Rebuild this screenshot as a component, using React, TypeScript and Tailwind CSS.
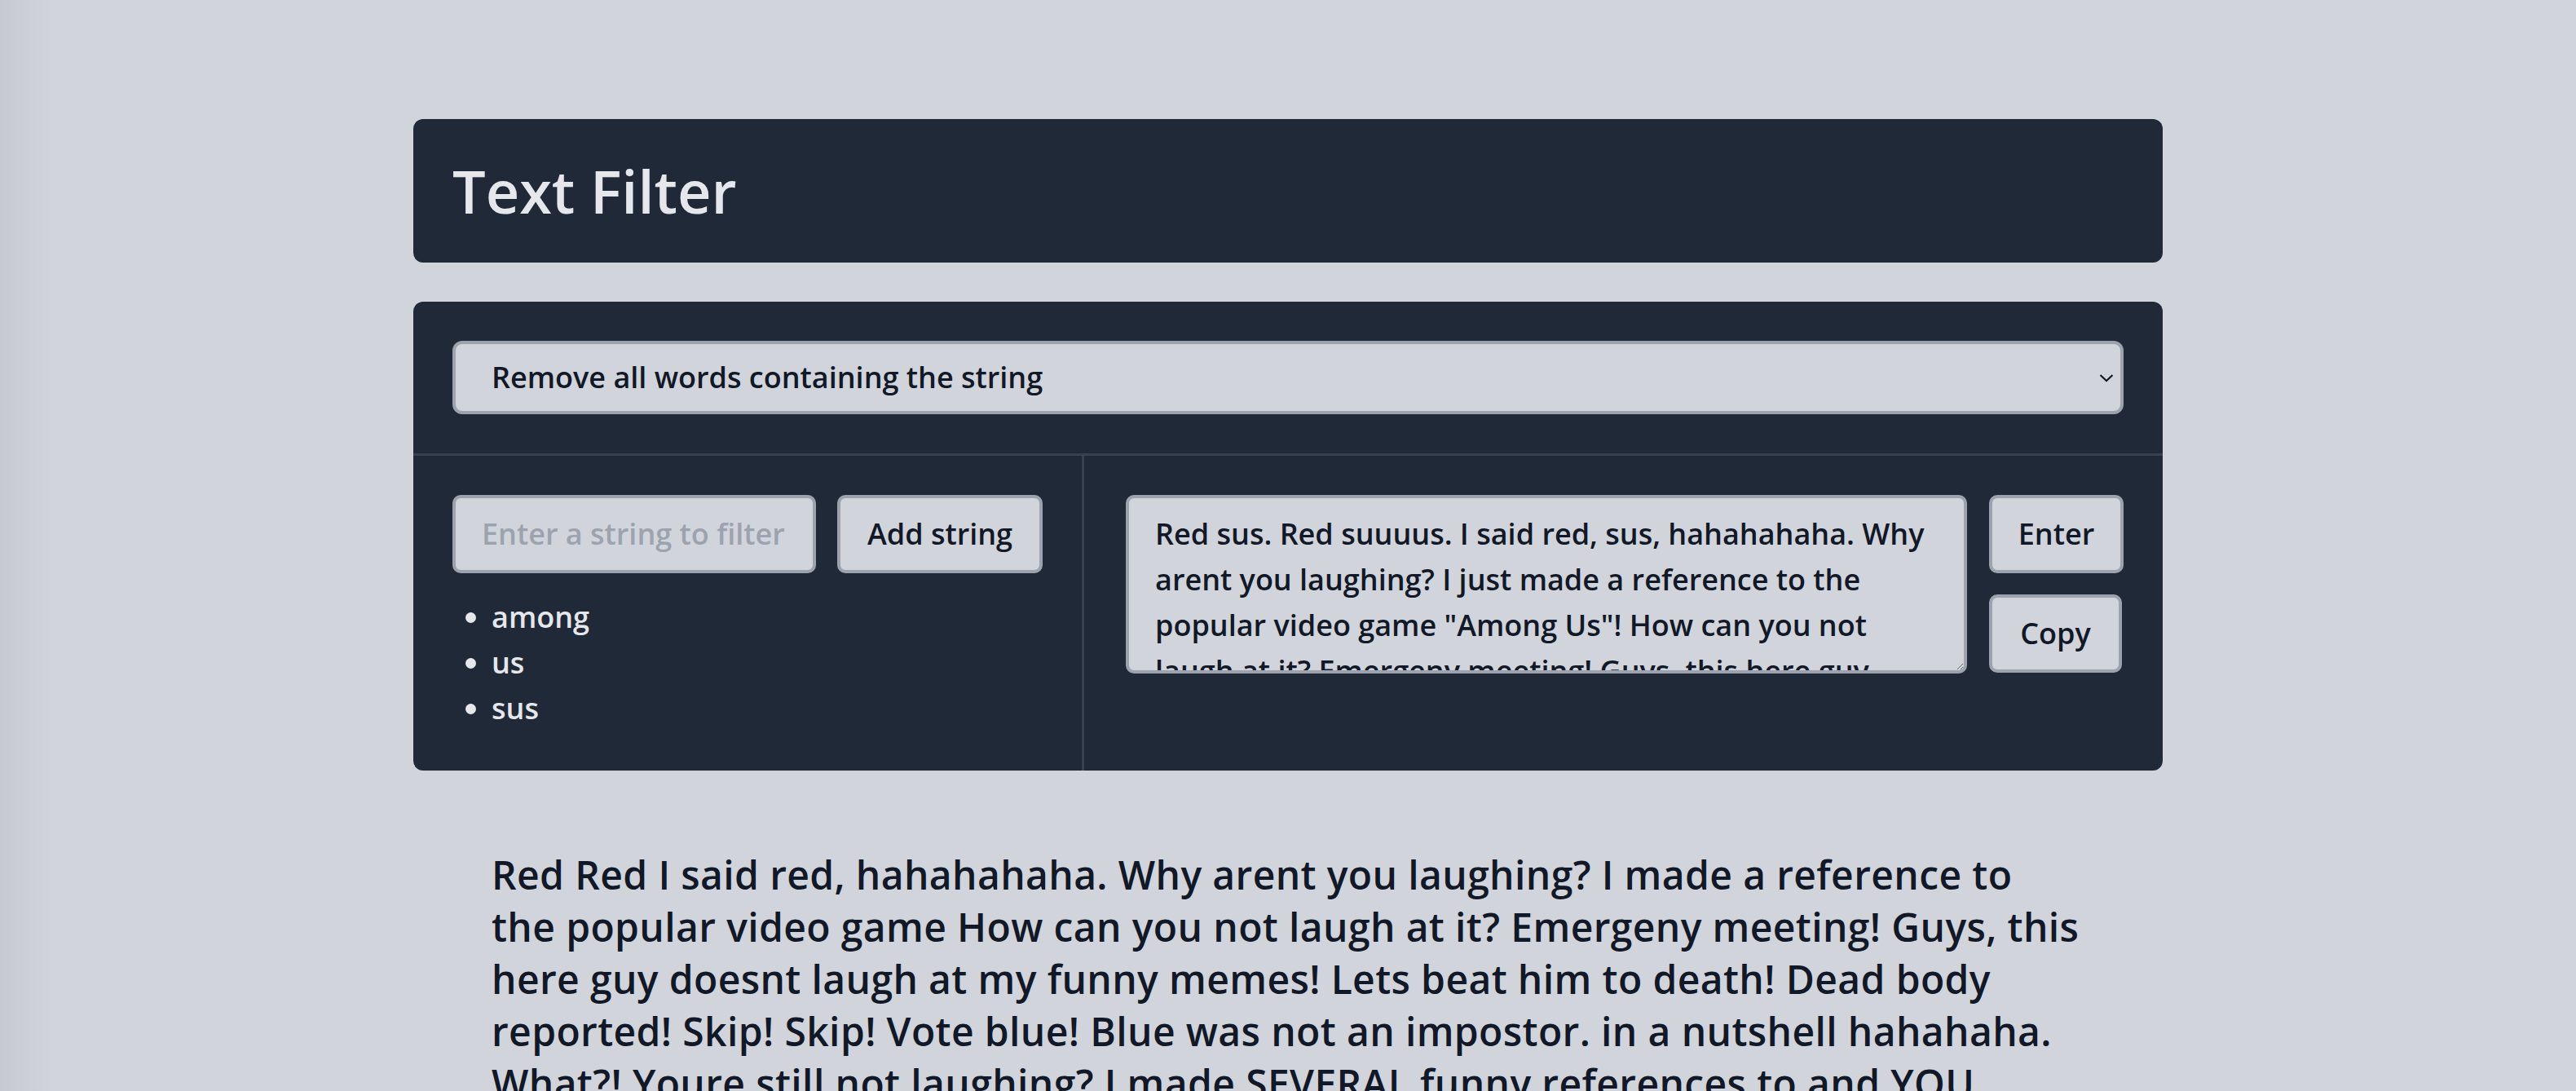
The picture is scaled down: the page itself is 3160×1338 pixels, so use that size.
import { useState } from "react";

const SOURCE =
  'Red sus. Red suuuus. I said red, sus, hahahahaha. Why arent you laughing? I just made a reference to the popular video game "Among Us"! How can you not laugh at it? Emergeny meeting! Guys, this here guy doesnt laugh at my funny memes! Lets beat him to death! Dead body reported! Skip! Skip! Vote blue! Blue was not an impostor. Among us in a nutshell hahahaha. What?! Youre still not laughing? I made SEVERAL funny references to Among Us and YOU STILL DONT LAUGH??!!!! Bruh. This is the worst game ever. Why are you not laughing? I am so funny. Red was the impostor all along.';

function filterText(text: string, words: string[]) {
  return text
    .split(" ")
    .filter((w) => !words.some((f) => w.toLowerCase().includes(f)))
    .join(" ");
}

export default function App() {
  const [filters] = useState(["among", "us", "sus"]);
  const [text, setText] = useState(SOURCE);
  const output = filterText(text, filters);

  return (
    <div className="min-h-screen bg-[#d1d5db] bg-[linear-gradient(to_right,#c6cad0,#d1d5db_64px)] pt-[146px] font-['Open_Sans',sans-serif] font-semibold">
      <div className="mx-auto w-[2146px]">
        <header className="rounded-[12px] bg-[#1f2937] p-[48px]">
          <h1 className="text-[72px] leading-[80px] text-[#e5e7eb]">Text Filter</h1>
        </header>

        <section className="mt-[48px] rounded-[12px] bg-[#1f2937] text-[36px] leading-[56px]">
          <div className="border-b-[3px] border-[#374151] p-[48px]">
            <div className="relative">
              <select className="h-[90px] w-full appearance-none rounded-[12px] border-[4px] border-[#9ca3af] bg-[#d1d5db] pl-[44px] text-[#111827] outline-none">
                <option>Remove all words containing the string</option>
                <option>Remove only the string</option>
              </select>
              <svg
                className="pointer-events-none absolute right-[12px] top-1/2 h-[12px] w-[18px] -translate-y-1/2"
                viewBox="0 0 18 12"
                fill="none"
                stroke="#111827"
                strokeWidth="2.2"
              >
                <path d="M1.5 3 9 10 16.5 3" />
              </svg>
            </div>
          </div>

          <div className="flex">
            <div className="border-r-[3px] border-[#374151] p-[48px]">
              <div className="flex gap-[26px]">
                <input
                  className="w-[446px] rounded-[10px] border-[4px] border-[#9ca3af] bg-[#d1d5db] px-[32px] py-[16px] text-[#111827] outline-none placeholder:text-[#9ca3af]"
                  placeholder="Enter a string to filter"
                />
                <button className="w-[252px] rounded-[10px] border-[4px] border-[#9ca3af] bg-[#d1d5db] py-[16px] text-[#111827]">
                  Add string
                </button>
              </div>
              <ul className="mt-[26px] list-disc pl-[48px] text-[#e5e7eb]">
                {filters.map((f) => (
                  <li key={f}>{f}</li>
                ))}
              </ul>
            </div>

            <div className="flex flex-1 items-start gap-[27px] py-[48px] pl-[51px] pr-[48px]">
              <textarea
                className="h-[219px] flex-1 overflow-hidden rounded-[10px] border-[4px] border-[#9ca3af] bg-[#d1d5db] px-[32px] py-[16px] text-[#111827] outline-none"
                value={text}
                onChange={(e) => setText(e.target.value)}
              />
              <div className="flex flex-col items-start gap-[26px]">
                <button className="w-[165px] rounded-[10px] border-[4px] border-[#9ca3af] bg-[#d1d5db] py-[16px] text-[#111827]">
                  Enter
                </button>
                <button className="w-[163px] rounded-[10px] border-[4px] border-[#9ca3af] bg-[#d1d5db] py-[16px] text-[#111827]">
                  Copy
                </button>
              </div>
            </div>
          </div>
        </section>

        <p className="mt-[96px] px-[96px] text-[48px] leading-[64px] tracking-[0.008em] text-[#111827]">{output}</p>
      </div>
    </div>
  );
}
